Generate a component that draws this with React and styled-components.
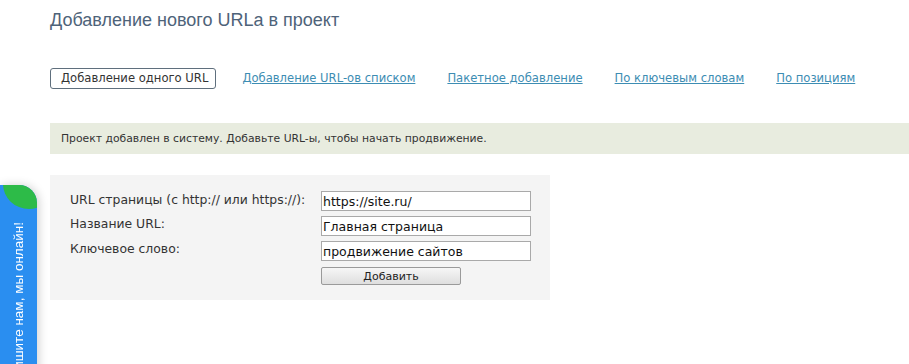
import React from 'react';
import styled, { createGlobalStyle } from 'styled-components';

const GlobalStyle = createGlobalStyle`
  html, body {
    margin: 0;
    padding: 0;
    background: #fff;
  }
  body {
    font-family: "DejaVu Sans", Verdana, sans-serif;
    color: #333;
  }
`;

const Page = styled.div`
  padding: 9px 0 0 50px;
  min-height: 364px;
  box-sizing: border-box;
`;

const Title = styled.h1`
  margin: 0;
  font-family: "Liberation Sans", Arial, sans-serif;
  font-weight: normal;
  font-size: 18px;
  line-height: 22px;
  color: #4e6379;
`;

const Tabs = styled.nav`
  display: flex;
  align-items: center;
  gap: 30px;
  margin-top: 37px;
  height: 21px;
`;

const Tab = styled.a`
  font-size: 11.6px;
  line-height: 19px;
  color: ${(p) => (p.$active ? '#333' : '#3d8db3')};
  text-decoration: ${(p) => (p.$active ? 'none' : 'underline')};
  border: 1px solid ${(p) => (p.$active ? '#5f6f7d' : 'transparent')};
  border-radius: 3px;
  padding: ${(p) => (p.$active ? '0 7px 0 10px' : '0')};
  margin-right: ${(p) => (p.$active ? '-5px' : '0')};
  cursor: pointer;
`;

const Notice = styled.div`
  margin-top: 34px;
  background: #e8ecdf;
  height: 31px;
  display: flex;
  align-items: center;
  padding-left: 11px;
  font-size: 10.8px;
  color: #333;
`;

const Panel = styled.div`
  margin-top: 21px;
  width: 500px;
  height: 125px;
  box-sizing: border-box;
  background: #f4f4f4;
  padding: 16px 0 0 20px;
`;

const FormGrid = styled.div`
  display: grid;
  grid-template-columns: 251px 210px;
  row-gap: 5px;
`;

const Label = styled.label`
  font-size: 12.4px;
  line-height: 15px;
  color: #333;
  padding-top: ${(p) => p.$pad || '0'};
`;

const Input = styled.input`
  box-sizing: border-box;
  width: 210px;
  height: 20px;
  border: 1px solid #a9a9a9;
  background: #fff;
  font-family: "DejaVu Sans", Verdana, sans-serif;
  font-size: 12.5px;
  color: #111;
  padding: 0 1px;
  outline: none;
`;

const Button = styled.button`
  grid-column: 2;
  width: 140px;
  height: 18px;
  margin-top: 1px;
  border: 1px solid #9a9a9a;
  border-radius: 2px;
  background: linear-gradient(#f6f6f6, #dedede);
  font-family: "DejaVu Sans", Verdana, sans-serif;
  font-size: 11px;
  color: #222;
  padding: 0;
`;

const ChatTab = styled.div`
  position: fixed;
  left: 0;
  top: 185px;
  bottom: -20px;
  width: 37px;
  background: #2a8ef0;
  border-top-right-radius: 18px;
  overflow: hidden;
  box-shadow: 2px 0 10px rgba(0, 0, 0, 0.18);
`;

const ChatDot = styled.div`
  position: absolute;
  right: -18px;
  top: -26px;
  width: 52px;
  height: 50px;
  border-radius: 50%;
  background: #2dbb48;
`;

const ChatLabel = styled.div`
  position: absolute;
  left: 11px;
  top: 37px;
  writing-mode: vertical-rl;
  transform: rotate(180deg);
  white-space: nowrap;
  font-family: "Liberation Sans", Arial, sans-serif;
  font-size: 13.5px;
  line-height: 15px;
  color: #fff;
`;

const tabs = [
  'Добавление URL-ов списком',
  'Пакетное добавление',
  'По ключевым словам',
  'По позициям',
];

export default function App() {
  return (
    <>
      <GlobalStyle />
      <Page>
        <Title>Добавление нового URLa в проект</Title>
        <Tabs>
          <Tab $active>Добавление одного URL</Tab>
          {tabs.map((t) => (
            <Tab key={t}>{t}</Tab>
          ))}
        </Tabs>
        <Notice>Проект добавлен в систему. Добавьте URL-ы, чтобы начать продвижение.</Notice>
        <Panel>
          <FormGrid>
            <Label $pad="1px">URL страницы (с http:// или https://):</Label>
            <Input defaultValue="https://site.ru/" />
            <Label>Название URL:</Label>
            <Input defaultValue="Главная страница" />
            <Label>Ключевое слово:</Label>
            <Input defaultValue="продвижение сайтов" />
            <Button>Добавить</Button>
          </FormGrid>
        </Panel>
      </Page>
      <ChatTab>
        <ChatDot />
        <ChatLabel>Напишите нам, мы онлайн!</ChatLabel>
      </ChatTab>
    </>
  );
}
